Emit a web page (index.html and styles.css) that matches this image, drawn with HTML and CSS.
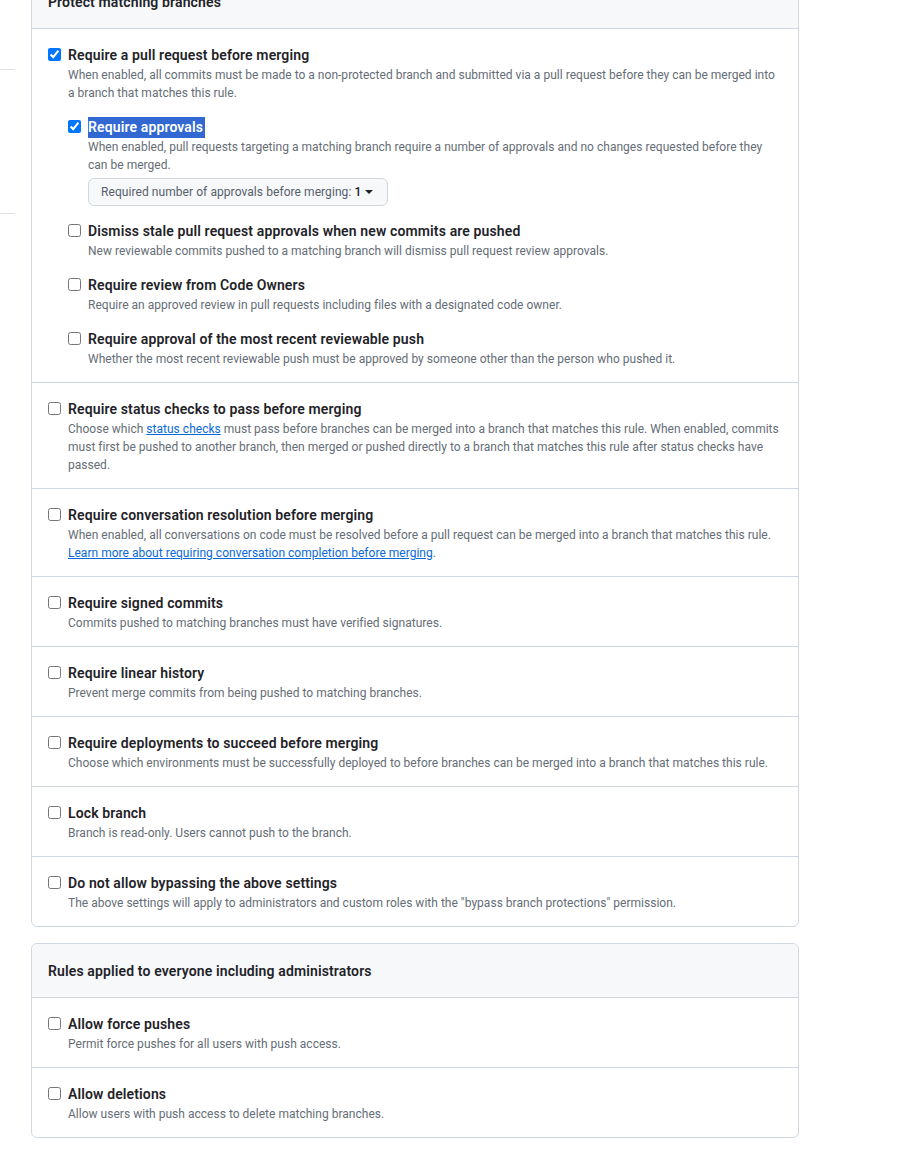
FILE: index.html
```html
<!DOCTYPE html>
<html lang="en">
<head>
<meta charset="utf-8">
<title>Branch protection rule</title>
<link rel="stylesheet" href="styles.css">
</head>
<body>
<div class="layout">
  <aside class="side">
    <div class="side-block"></div>
  </aside>
  <main class="main">
    <section class="box">
      <header class="box-header">Protect matching branches</header>

      <div class="row">
        <div class="check">
          <input type="checkbox" checked>
          <div class="check-body">
            <div class="title">Require a pull request before merging</div>
            <p class="desc">When enabled, all commits must be made to a non-protected branch and submitted via a pull request before they can be merged into a branch that matches this rule.</p>
            <div class="nested">
              <div class="check sub">
                <input type="checkbox" checked>
                <div class="check-body">
                  <div class="title"><span class="selected">Require approvals</span></div>
                  <p class="desc">When enabled, pull requests targeting a matching branch require a number of approvals and no changes requested before they can be merged.</p>
                  <button class="select-btn" type="button">Required number of approvals before merging: <span class="val">1</span><span class="caret"></span></button>
                </div>
              </div>
              <div class="check sub">
                <input type="checkbox">
                <div class="check-body">
                  <div class="title">Dismiss stale pull request approvals when new commits are pushed</div>
                  <p class="desc">New reviewable commits pushed to a matching branch will dismiss pull request review approvals.</p>
                </div>
              </div>
              <div class="check sub">
                <input type="checkbox">
                <div class="check-body">
                  <div class="title">Require review from Code Owners</div>
                  <p class="desc">Require an approved review in pull requests including files with a designated code owner.</p>
                </div>
              </div>
              <div class="check sub">
                <input type="checkbox">
                <div class="check-body">
                  <div class="title">Require approval of the most recent reviewable push</div>
                  <p class="desc">Whether the most recent reviewable push must be approved by someone other than the person who pushed it.</p>
                </div>
              </div>
            </div>
          </div>
        </div>
      </div>

      <div class="row">
        <div class="check">
          <input type="checkbox">
          <div class="check-body">
            <div class="title">Require status checks to pass before merging</div>
            <p class="desc">Choose which <a href="#">status checks</a> must pass before branches can be merged into a branch that matches this rule. When enabled, commits must first be pushed to another branch, then merged or pushed directly to a branch that matches this rule after status checks have passed.</p>
          </div>
        </div>
      </div>

      <div class="row">
        <div class="check">
          <input type="checkbox">
          <div class="check-body">
            <div class="title">Require conversation resolution before merging</div>
            <p class="desc">When enabled, all conversations on code must be resolved before a pull request can be merged into a branch that matches this rule. <a href="#">Learn more about requiring conversation completion before merging</a>.</p>
          </div>
        </div>
      </div>

      <div class="row">
        <div class="check">
          <input type="checkbox">
          <div class="check-body">
            <div class="title">Require signed commits</div>
            <p class="desc">Commits pushed to matching branches must have verified signatures.</p>
          </div>
        </div>
      </div>

      <div class="row">
        <div class="check">
          <input type="checkbox">
          <div class="check-body">
            <div class="title">Require linear history</div>
            <p class="desc">Prevent merge commits from being pushed to matching branches.</p>
          </div>
        </div>
      </div>

      <div class="row">
        <div class="check">
          <input type="checkbox">
          <div class="check-body">
            <div class="title">Require deployments to succeed before merging</div>
            <p class="desc">Choose which environments must be successfully deployed to before branches can be merged into a branch that matches this rule.</p>
          </div>
        </div>
      </div>

      <div class="row">
        <div class="check">
          <input type="checkbox">
          <div class="check-body">
            <div class="title">Lock branch</div>
            <p class="desc">Branch is read-only. Users cannot push to the branch.</p>
          </div>
        </div>
      </div>

      <div class="row">
        <div class="check">
          <input type="checkbox">
          <div class="check-body">
            <div class="title">Do not allow bypassing the above settings</div>
            <p class="desc">The above settings will apply to administrators and custom roles with the "bypass branch protections" permission.</p>
          </div>
        </div>
      </div>
    </section>

    <section class="box">
      <header class="box-header">Rules applied to everyone including administrators</header>
      <div class="row">
        <div class="check">
          <input type="checkbox">
          <div class="check-body">
            <div class="title">Allow force pushes</div>
            <p class="desc">Permit force pushes for all users with push access.</p>
          </div>
        </div>
      </div>
      <div class="row">
        <div class="check">
          <input type="checkbox">
          <div class="check-body">
            <div class="title">Allow deletions</div>
            <p class="desc">Allow users with push access to delete matching branches.</p>
          </div>
        </div>
      </div>
    </section>
  </main>
</div>
</body>
</html>
```
FILE: styles.css
```css
* { box-sizing: border-box; }

html, body {
  margin: 0;
  padding: 0;
  background: #ffffff;
}

body {
  font-family: Roboto, "Liberation Sans", sans-serif;
  color: #1f2328;
  height: 1149px;
  overflow: hidden;
}

.layout {
  display: flex;
  align-items: flex-start;
}

.side {
  width: 15px;
  flex: 0 0 15px;
  padding-top: 69px;
}

.side-block {
  height: 145px;
  border-top: 1px solid #dfe3e8;
  border-bottom: 1px solid #dfe3e8;
}

.main {
  margin-left: 16px;
  margin-top: -26px;
  width: 768px;
  display: flex;
  flex-direction: column;
  gap: 16px;
}

.box {
  border: 1px solid #d0d7de;
  border-radius: 6px;
  background: #ffffff;
}

.box-header {
  background: #f6f8fa;
  padding: 17px 16px 15px;
  font-size: 14px;
  line-height: 21px;
  font-weight: 600;
  letter-spacing: 0.13px;
  border-bottom: 1px solid #d0d7de;
  border-radius: 6px 6px 0 0;
}

.row {
  padding: 16px 16px 14px;
}

.row + .row {
  border-top: 1px solid #d0d7de;
}

.check {
  display: grid;
  grid-template-columns: 13px 1fr;
  column-gap: 7px;
  align-items: start;
}

.check input {
  width: 13px;
  height: 13px;
  margin: 3px 0 0 0;
}

.title {
  font-size: 14px;
  line-height: 21px;
  font-weight: 600;
  letter-spacing: 0.13px;
  color: #1f2328;
}

.desc {
  margin: 0;
  font-size: 12px;
  line-height: 18px;
  letter-spacing: 0.02px;
  color: #656d76;
}

.desc a {
  color: #0969da;
  text-decoration: underline;
}

.nested {
  display: flex;
  flex-direction: column;
  gap: 15px;
  margin-top: 15px;
}

.selected {
  display: inline-block;
  background: #3268d2;
  color: #ffffff;
  height: 21px;
  padding-right: 2px;
}

.select-btn {
  margin-top: 4px;
  height: 28px;
  padding: 0 14px 0 12px;
  display: inline-flex;
  align-items: center;
  font-family: inherit;
  font-size: 12px;
  letter-spacing: 0.07px;
  color: #57606a;
  background: #f6f8fa;
  border: 1px solid #d0d7de;
  border-radius: 6px;
}

.select-btn .val {
  color: #1f2328;
  font-weight: 500;
  margin-left: 3px;
}

.caret {
  display: inline-block;
  margin-left: 4px;
  width: 0;
  height: 0;
  border-left: 4px solid transparent;
  border-right: 4px solid transparent;
  border-top: 4px solid #1f2328;
}
```
